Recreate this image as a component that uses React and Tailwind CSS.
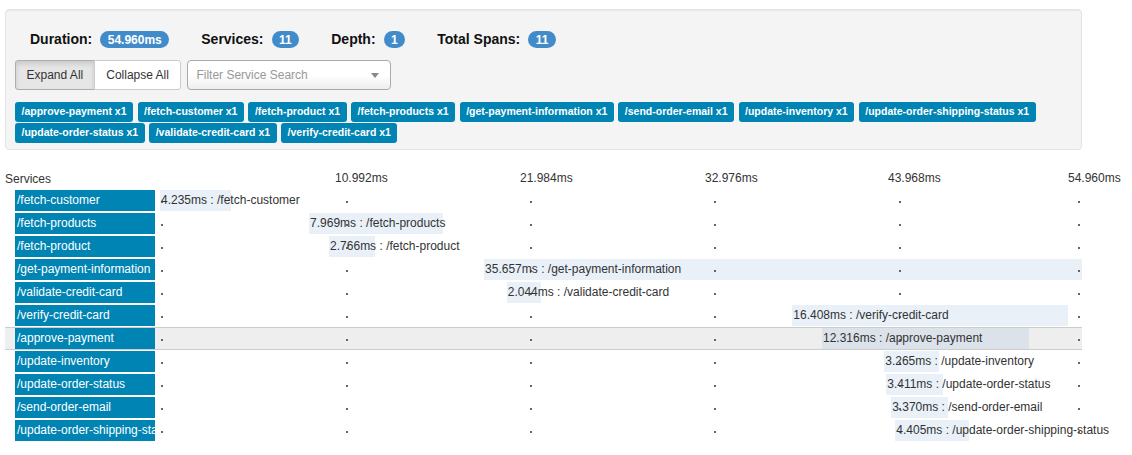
const TOTAL = 54.96;

const spans = [
  { name: '/fetch-customer', dur: 4.235, start: 0 },
  { name: '/fetch-products', dur: 7.969, start: 8.885 },
  { name: '/fetch-product', dur: 2.766, start: 10.08 },
  { name: '/get-payment-information', dur: 35.657, start: 19.32 },
  { name: '/validate-credit-card', dur: 2.044, start: 20.67 },
  { name: '/verify-credit-card', dur: 16.408, start: 37.69 },
  { name: '/approve-payment', dur: 12.316, start: 39.46, selected: true },
  { name: '/update-inventory', dur: 3.265, start: 43.17 },
  { name: '/update-order-status', dur: 3.411, start: 43.29 },
  { name: '/send-order-email', dur: 3.37, start: 43.59 },
  { name: '/update-order-shipping-status', dur: 4.405, start: 43.83 },
];

const tags = [
  '/approve-payment x1',
  '/fetch-customer x1',
  '/fetch-product x1',
  '/fetch-products x1',
  '/get-payment-information x1',
  '/send-order-email x1',
  '/update-inventory x1',
  '/update-order-shipping-status x1',
  '/update-order-status x1',
  '/validate-credit-card x1',
  '/verify-credit-card x1',
];

// tick label offsets and dot offsets from the timeline origin, px
const ticks = [
  { label: '10.992ms', left: 175 },
  { label: '21.984ms', left: 360 },
  { label: '32.976ms', left: 545 },
  { label: '43.968ms', left: 728 },
  { label: '54.960ms', left: 908 },
];
const dots = [1, 186, 370, 554, 739, 918];

function Badge({ children }) {
  return (
    <span className="flex h-[17px] items-center rounded-[10px] bg-[#428bca] px-[7.5px] text-[12px] font-bold leading-none text-white">
      {children}
    </span>
  );
}

function Stat({ label, value, first }) {
  return (
    <div className={`flex items-center gap-[8px] ${first ? '' : 'ml-[32px]'}`}>
      <span className="text-[14px] font-bold text-[#111]">{label}</span>
      <Badge>{value}</Badge>
    </div>
  );
}

function SpanRow({ span }) {
  const left = (span.start / TOTAL) * 100;
  const width = (span.dur / TOTAL) * 100;
  return (
    <div
      className={`flex h-[23px] border-y ${
        span.selected ? 'border-[#ccc] bg-[#eee]' : 'border-transparent'
      }`}
    >
      <div className="ml-[10px] h-[21px] w-[140px] shrink-0 overflow-hidden whitespace-nowrap bg-[#0084b4] pl-[2px] text-[12px] leading-[21px] text-white">
        {span.name}
      </div>
      <div className="relative ml-[5px] h-[21px] flex-1">
        <div
          className={`absolute top-0 h-[21px] ${span.selected ? 'bg-[#dbe2ea]' : 'bg-[#e9f0f8]'}`}
          style={{ left: `${left}%`, width: `${width}%` }}
        />
        {dots.map((d) => (
          <div key={d} className="absolute top-[11px] h-[1.5px] w-[1.5px] bg-[#666]" style={{ left: d }} />
        ))}
        <div
          className="absolute top-0 whitespace-nowrap pl-[1px] text-[12px] leading-[21px] text-[#333]"
          style={{ left: `${left}%` }}
        >
          {span.dur.toFixed(3)}ms : {span.name}
        </div>
      </div>
    </div>
  );
}

export default function App() {
  return (
    <div className="min-h-[455px] bg-white pt-[9px] font-[Liberation_Sans,Arial,sans-serif]">
      <div className="ml-[5px] w-[1077px] rounded-[4px] border border-[#e3e3e3] bg-[#f4f4f4] px-[9px] pb-[6px] pt-[19px] shadow-[inset_0_1px_1px_rgba(0,0,0,0.05)]">
        <div className="flex h-[21px] items-center pl-[15px]">
          <Stat first label="Duration:" value="54.960ms" />
          <Stat label="Services:" value="11" />
          <Stat label="Depth:" value="1" />
          <Stat label="Total Spans:" value="11" />
        </div>

        <div className="mt-[10px] flex items-center gap-[6px]">
          <div className="flex h-[30px] text-[12px] text-[#333]">
            <button
              type="button"
              className="rounded-l-[3px] border border-[#adadad] bg-[#e6e6e6] px-[10.5px] shadow-[inset_0_3px_5px_rgba(0,0,0,0.125)]"
            >
              Expand All
            </button>
            <button
              type="button"
              className="-ml-px rounded-r-[3px] border border-[#ccc] bg-white px-[11.5px]"
            >
              Collapse All
            </button>
          </div>
          <div className="flex h-[30px] w-[204px] items-center justify-between rounded-[4px] border border-[#aaa] bg-[linear-gradient(to_top,#eee_0%,#fff_50%)] pl-[8px] pr-[11px] text-[12px] text-[#999]">
            <span>Filter Service Search</span>
            <span className="h-0 w-0 border-x-[4px] border-t-[5px] border-x-transparent border-t-[#888]" />
          </div>
        </div>

        <div className="mt-[12px] flex flex-wrap gap-x-[4.5px] gap-y-[1px]">
          {tags.map((t) => (
            <span
              key={t}
              className="flex h-[20px] items-center rounded-[3px] bg-[#0084b4] px-[6.5px] text-[10.5px] font-bold text-white"
            >
              {t}
            </span>
          ))}
        </div>
      </div>

      <div className="mt-[18px] w-[1082px]">
        <div className="flex h-[21px] items-center text-[12px] text-[#333]">
          <div className="w-[155px] shrink-0 pl-[5px]">Services</div>
          <div className="relative ml-[5px] h-[21px] flex-1">
            {ticks.map((t) => (
              <span key={t.label} className="absolute top-0 leading-[21px]" style={{ left: t.left }}>
                {t.label}
              </span>
            ))}
          </div>
        </div>
        <div className="ml-[5px]">
          {spans.map((s) => (
            <SpanRow key={s.name} span={s} />
          ))}
        </div>
      </div>
    </div>
  );
}
